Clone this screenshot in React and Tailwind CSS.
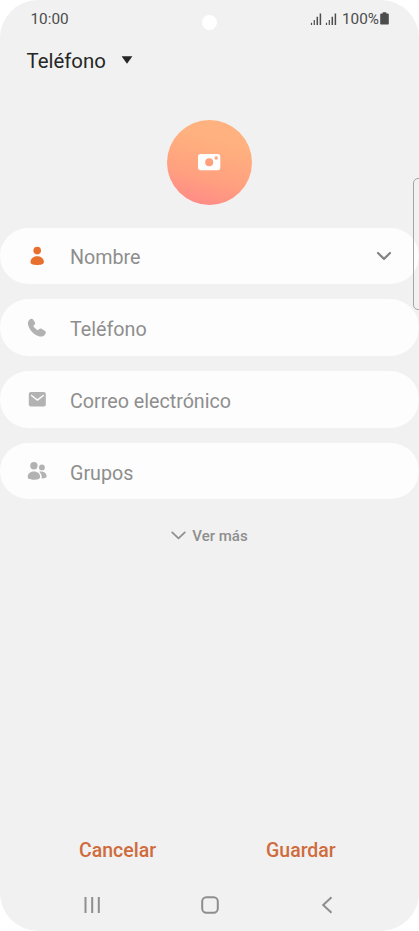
import React from "react";

const PersonIcon = () => (
  <svg width="22" height="22" viewBox="0 0 22 22" fill="#e8702f">
    <circle cx="11.200" cy="5.600" r="3.800" />
    <path d="M11.200 11.200c4 0 6.700 2.500 6.700 5.700 0 2.300-3 3-6.700 3s-6.700-.7-6.700-3c0-3.200 2.700-5.700 6.700-5.700z" />
  </svg>
);

const PhoneIcon = () => (
  <svg width="22" height="22" viewBox="0 0 22 22" fill="#b2b2b2">
    <path d="M3.700 2.500C4.900 1.500 6.300 1.600 7.200 2.800l1.500 2.100c.7 1 .6 2-.3 2.800L7.300 8.800c1 2 2.400 3.400 4.500 4.500l1.200-1c.9-.8 1.800-.9 2.800-.3l2.900 1.700c1.200.7 1.500 1.800.8 3-1.500 2.700-4.200 3.500-7.300 2.300C7.200 17 3.600 13.200 2.200 8.200 1.500 5.900 2 3.900 3.700 2.500z" />
  </svg>
);

const MailIcon = () => (
  <svg width="22" height="22" viewBox="0 0 22 22">
    <rect x="2.800" y="4" width="17" height="14.600" rx="2" fill="#b2b2b2" />
    <path d="M5.500 7.500l5.900 4.600 5.900-4.600" fill="none" stroke="#fdfdfd" strokeWidth="1.400" strokeLinecap="round" strokeLinejoin="round" />
  </svg>
);

const GroupIcon = () => (
  <svg width="22" height="22" viewBox="0 0 22 22" fill="#b2b2b2">
    <circle cx="7.900" cy="5.800" r="3.700" />
    <path d="M7.900 11.400c3.900 0 6.200 2.300 6.200 5.300 0 2.300-2.400 3-6.200 3s-6.200-.7-6.200-3c0-3 2.300-5.300 6.200-5.300z" />
    <circle cx="15.900" cy="7.400" r="2.900" />
    <path d="M13.200 11.700c4.800-.7 7.400 1.700 7.400 4.600 0 1.600-1.800 2.200-5 2.200.4-2.800-.2-5-2.400-6.800z" />
  </svg>
);

const CameraIcon = () => (
  <svg width="24" height="18" viewBox="0 0 24 18">
    <rect x="1" y="1" width="22.300" height="16.300" rx="2.800" fill="#fdfdfd" />
    <circle cx="12.200" cy="9.200" r="4" fill="#ff9f7c" />
    <circle cx="19.200" cy="5" r="1.700" fill="#ffa47d" />
  </svg>
);

const SignalIcon = () => (
  <svg width="12" height="12" viewBox="0 0 12 12" fill="none" stroke="#4c4c4c">
    <path d="M1.500 12V9.800M4.300 12V7" strokeWidth="1.200" />
    <path d="M7.300 12V3.800M10.400 12V.600" strokeWidth="1.500" />
  </svg>
);

const fields = [
  { label: "Nombre", icon: PersonIcon, expandable: true },
  { label: "Teléfono", icon: PhoneIcon },
  { label: "Correo electrónico", icon: MailIcon },
  { label: "Grupos", icon: GroupIcon },
];

const Field = ({ label, icon: Icon, expandable }) => (
  <div className="flex h-[56.500px] items-center rounded-full bg-[#fdfdfd] pl-[26px] pr-[27px]">
    <Icon />
    <span className="ml-[22px] flex-1 pt-[5px] text-[19.700px] leading-6 text-[#8e8e8e]">{label}</span>
    {expandable && (
      <svg width="16" height="10" viewBox="0 0 16 10" fill="none" stroke="#858585" strokeWidth="2.200" strokeLinecap="round" strokeLinejoin="round">
        <path d="M2 2l6 5.900L14 2" />
      </svg>
    )}
  </div>
);

const App = () => {
  return (
    <div className="h-[931px] w-[419px] bg-white font-['Roboto',sans-serif]">
      <div className="relative flex h-full flex-col overflow-hidden rounded-[38px] bg-[#f1f1f1]">
        {/* Status bar */}
        <div className="flex h-[38px] items-center justify-between pl-[30.500px] pr-[30px] pt-[2px] text-[15.300px] leading-none text-[#4c4c4c]">
          <span>10:00</span>
          <div className="flex items-center">
            <div className="mr-[5px] flex gap-[3px] pb-[2px]">
              <SignalIcon />
              <SignalIcon />
            </div>
            <span>100%</span>
            <svg className="mb-[3px] ml-[1px]" width="9" height="13" viewBox="0 0 9 13" fill="#4c4c4c">
              <path d="M2.700.3h3.600v1.300h1.500c.7 0 1 .3 1 .9v9c0 .7-.3 1-1 1H1.200c-.7 0-1-.3-1-1v-9c0-.6.3-.9 1-.9h1.500z" />
            </svg>
          </div>
        </div>
        {/* Front camera */}
        <div className="absolute left-[202px] top-[15px] size-[15px] rounded-full bg-white" />

        {/* Storage selector */}
        <div className="flex h-11 items-center pl-[26.500px] text-[#262626]">
          <span className="pt-px text-[20.400px] leading-6">Teléfono</span>
          <svg className="mb-px ml-[15px]" width="12" height="8" viewBox="0 0 12 8" fill="currentColor">
            <path d="M.6.300h10.800L6 7.800z" />
          </svg>
        </div>

        {/* Photo */}
        <div className="mx-auto mt-[38px] flex size-[85px] items-center justify-center rounded-full bg-linear-[195deg,#ffb27f_25%,#ffa07f_65%,#ff8589_100%] pb-[2px] pr-px">
          <CameraIcon />
        </div>

        <div className="mt-[22.500px] flex flex-col gap-[15.300px]">
          {fields.map((field) => (
            <Field key={field.label} {...field} />
          ))}
        </div>

        <div className="mt-[25px] flex items-center justify-center gap-[6px] text-[#8e8e8e]">
          <svg className="mb-[2px]" width="15" height="9" viewBox="0 0 15 9" fill="none" stroke="currentColor" strokeWidth="1.700" strokeLinecap="round" strokeLinejoin="round">
            <path d="M1.200 1.300l6.300 6 6.300-6" />
          </svg>
          <span className="text-[15px] font-medium leading-6">Ver más</span>
        </div>

        {/* Actions */}
        <div className="mt-auto flex h-[57px] items-center pt-[2px] text-[19.500px] font-medium text-[#cf6b3c]">
          <span className="ml-[79px] w-[187px]">Cancelar</span>
          <span>Guardar</span>
        </div>

        {/* Navigation bar */}
        <div className="flex h-[53px] items-center justify-between pl-[83px] pr-[86px]">
          <svg width="18" height="18" viewBox="0 0 18 18" fill="none" stroke="#8e8e8e" strokeWidth="2">
            <path d="M2.500 1v16M9.200 1v16M15.800 1v16" />
          </svg>
          <svg className="mr-[3px]" width="18" height="18" viewBox="0 0 18 18" fill="none" stroke="#8e8e8e" strokeWidth="2">
            <rect x="1.200" y="1.200" width="15.600" height="15.600" rx="4.200" />
          </svg>
          <svg width="12" height="18" viewBox="0 0 12 18" fill="none" stroke="#8e8e8e" strokeWidth="2">
            <path d="M10.500 1.200L2.200 9l8.300 7.800" />
          </svg>
        </div>

        {/* Edge panel handle */}
        <div className="absolute -right-[5px] top-[178px] h-[132px] w-[11px] rounded-[5px] border border-[#a5a5a5]" />
      </div>
    </div>
  );
};

export default App;
